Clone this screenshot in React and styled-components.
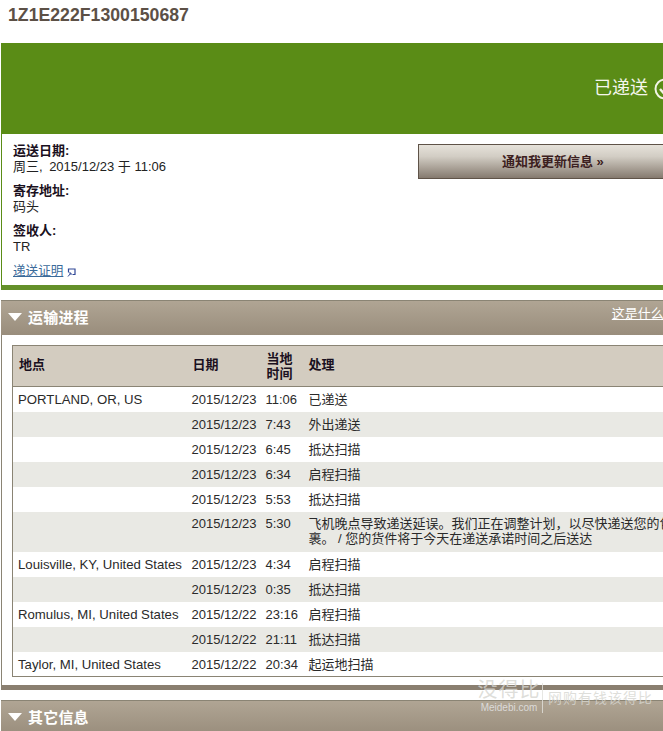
import React from 'react';
import styled, { createGlobalStyle } from 'styled-components';

const FONT = '"Liberation Sans", Arial, "Noto Sans CJK SC", sans-serif';

const GlobalStyle = createGlobalStyle`
  html, body {
    margin: 0;
    padding: 0;
    background: #fff;
    overflow: hidden;
  }
  body {
    font-family: ${FONT};
    font-size: 13px;
    color: #222;
  }
`;

const Page = styled.div`
  position: relative;
  width: 663px;
  height: 731px;
  overflow: hidden;
`;

const Sheet = styled.div`
  width: 900px;
  padding-left: 1px;
`;

const Title = styled.h1`
  margin: 0;
  padding: 5px 0 0 7px;
  height: 43px;
  box-sizing: border-box;
  font-size: 17.7px;
  line-height: 21px;
  font-weight: bold;
  color: #5c5046;
`;

const StatusCard = styled.section`
  border-left: 1px solid #5a8c16;
  border-bottom: 5px solid #64902a;
`;

const StatusBanner = styled.div`
  height: 91px;
  margin-left: -1px;
  background: #5a8c16;
  display: flex;
  align-items: center;
  padding-left: 593px;
  gap: 6px;
  color: #fff;
  font-size: 18px;
`;

const StatusLabel = styled.span`
  line-height: 22px;
  margin-top: -2px;
  color: #f4f6ec;
`;

const StatusBody = styled.div`
  display: flex;
  height: 151px;
`;

const Details = styled.div`
  width: 416px;
  padding: 9px 0 0 11px;
  box-sizing: border-box;
`;

const Detail = styled.div`
  margin-bottom: 8px;
  line-height: 16px;
`;

const DetailLabel = styled.div`
  font-weight: bold;
  color: #1a1020;
`;

const ProofLink = styled.a`
  color: #3a6a9a;
  text-decoration: underline;
  font-size: 12.6px;
  line-height: 16px;
`;

const PopupIcon = styled.svg`
  width: 9px;
  height: 9px;
  margin-left: 4px;
  vertical-align: -2px;
`;

const NotifyButton = styled.button`
  width: 300px;
  height: 35px;
  margin-top: 10px;
  padding: 0 0 3px;
  border: 1px solid #5f5348;
  background: linear-gradient(#e6e2da, #d2cdc4 35%, #857a6f);
  font-family: ${FONT};
  font-size: 13px;
  font-weight: bold;
  color: #3c2020;
  text-align: left;
  text-indent: 83px;
`;

const Section = styled.section`
  margin-top: 10px;
`;

const SectionHead = styled.header`
  height: 35px;
  box-sizing: border-box;
  border-top: 1px solid #8a8474;
  background: linear-gradient(#b0a594, #998d7c);
  display: flex;
  align-items: center;
  padding: 0 0 2px 7px;
  color: #fff;
`;

const Caret = styled.span`
  width: 0;
  height: 0;
  border-left: 7px solid transparent;
  border-right: 7px solid transparent;
  border-top: 8px solid #fff;
  margin-right: 6px;
`;

const SectionTitle = styled.h2`
  margin: 0;
  padding-bottom: 2px;
  font-size: 15px;
  letter-spacing: 0.2px;
  font-weight: bold;
  color: #fff;
`;

const HelpLink = styled.a`
  margin-left: 523px;
  margin-top: -9px;
  color: #fff;
  font-size: 13px;
  text-decoration: underline;
`;

const SectionBody = styled.div`
  border-left: 1px solid #8a8474;
  border-bottom: 5px solid #8a7f70;
  padding: 10px 0 8px 10px;
`;

const Table = styled.table`
  width: 680px;
  border-collapse: collapse;
  table-layout: fixed;
  border: 1px solid #8a8474;
  border-right: 0;
`;

const HeadCell = styled.th`
  box-sizing: border-box;
  height: 41px;
  padding: 0 0 ${p => (p.$lift ? 3 : 0)}px ${p => p.$pad || 6}px;
  background: #d3ccc0;
  border-bottom: 1px solid #8a8474;
  text-align: left;
  font-size: 13px;
  line-height: 15px;
  font-weight: bold;
  color: #1a1020;
`;

const Row = styled.tr`
  background: ${p => (p.$shaded ? '#e9e9e4' : '#fff')};
`;

const Cell = styled.td`
  box-sizing: border-box;
  height: ${p => (p.$tall ? 40 : 25)}px;
  padding: ${p => (p.$tall ? 4 : 5)}px 0 0 5px;
  vertical-align: top;
  font-size: 13px;
  line-height: 15px;
  color: #2a2a2a;
`;

const PlaceCell = styled(Cell)`
  font-size: 13.2px;
  white-space: nowrap;
`;

const Watermark = styled.div`
  position: absolute;
  left: 476px;
  top: 678px;
  display: flex;
  align-items: center;
  color: rgba(214, 214, 208, 0.8);
`;

const MarkBrand = styled.div`
  width: 66px;
  text-align: center;
`;

const MarkName = styled.div`
  font-size: 20px;
  line-height: 24px;
  letter-spacing: 1px;
`;

const MarkSite = styled.div`
  font-size: 10px;
  line-height: 12px;
  color: rgba(225, 225, 225, 0.9);
`;

const MarkSlogan = styled.div`
  border-left: 1px solid rgba(225, 225, 220, 0.8);
  height: 30px;
  line-height: 30px;
  padding-left: 5px;
  font-size: 14px;
  letter-spacing: 1px;
  white-space: nowrap;
  margin-top: 4px;
`;

const rows = [
  ['PORTLAND, OR, US', '2015/12/23', '11:06', '已递送'],
  ['', '2015/12/23', '7:43', '外出递送'],
  ['', '2015/12/23', '6:45', '抵达扫描'],
  ['', '2015/12/23', '6:34', '启程扫描'],
  ['', '2015/12/23', '5:53', '抵达扫描'],
  ['', '2015/12/23', '5:30', '飞机晚点导致递送延误。我们正在调整计划，以尽快递送您的包裹。 / 您的货件将于今天在递送承诺时间之后送达', true],
  ['Louisville, KY, United States', '2015/12/23', '4:34', '启程扫描'],
  ['', '2015/12/23', '0:35', '抵达扫描'],
  ['Romulus, MI, United States', '2015/12/22', '23:16', '启程扫描'],
  ['', '2015/12/22', '21:11', '抵达扫描'],
  ['Taylor, MI, United States', '2015/12/22', '20:34', '起运地扫描'],
];

function CheckBadge() {
  return (
    <svg width="22" height="22" viewBox="0 0 22 22">
      <circle cx="11" cy="11" r="9.5" fill="#5a8c16" stroke="#f2f5e6" strokeWidth="2" />
      <path d="M6 11 L10 15.5 L16.5 7" fill="none" stroke="#f2f5e6" strokeWidth="2.4" />
    </svg>
  );
}

export default function App() {
  return (
    <Page>
      <GlobalStyle />
      <Sheet>
        <Title>1Z1E222F1300150687</Title>
        <StatusCard>
          <StatusBanner>
            <StatusLabel>已递送</StatusLabel>
            <CheckBadge />
          </StatusBanner>
          <StatusBody>
            <Details>
              <Detail>
                <DetailLabel>运送日期:</DetailLabel>
                周三,{'\u2002'}2015/12/23 于 11:06
              </Detail>
              <Detail>
                <DetailLabel>寄存地址:</DetailLabel>
                码头
              </Detail>
              <Detail>
                <DetailLabel>签收人:</DetailLabel>
                TR
              </Detail>
              <ProofLink href="#">递送证明</ProofLink>
              <PopupIcon viewBox="0 0 9 9">
                <path d="M1.5 4.5 V1 H8 V6.5 H5.5" fill="none" stroke="#2f4796" strokeWidth="1.2" />
                <path d="M1 8.5 L3.5 5.5 M2 5 H4 V7" fill="none" stroke="#2f4796" strokeWidth="1" />
              </PopupIcon>
            </Details>
            <NotifyButton>通知我更新信息 »</NotifyButton>
          </StatusBody>
        </StatusCard>

        <Section>
          <SectionHead>
            <Caret />
            <SectionTitle>运输进程</SectionTitle>
            <HelpLink href="#">这是什么?</HelpLink>
          </SectionHead>
          <SectionBody>
            <Table>
              <colgroup>
                <col style={{ width: 174 }} />
                <col style={{ width: 74 }} />
                <col style={{ width: 43 }} />
                <col />
              </colgroup>
              <thead>
                <tr>
                  <HeadCell $lift>地点</HeadCell>
                  <HeadCell $pad={6} $lift>日期</HeadCell>
                  <HeadCell $pad={6}>当地<br />时间</HeadCell>
                  <HeadCell $pad={5} $lift>处理</HeadCell>
                </tr>
              </thead>
              <tbody>
                {rows.map((r, i) => (
                  <Row key={i} $shaded={i % 2 === 1}>
                    <PlaceCell $tall={r[4]}>{r[0]}</PlaceCell>
                    <Cell $tall={r[4]}>{r[1]}</Cell>
                    <Cell $tall={r[4]}>{r[2]}</Cell>
                    <Cell $tall={r[4]}>{r[3]}</Cell>
                  </Row>
                ))}
              </tbody>
            </Table>
          </SectionBody>
        </Section>

        <Section>
          <SectionHead>
            <Caret />
            <SectionTitle>其它信息</SectionTitle>
          </SectionHead>
        </Section>
      </Sheet>
      <Watermark>
        <MarkBrand>
          <MarkName>没得比</MarkName>
          <MarkSite>Meidebi.com</MarkSite>
        </MarkBrand>
        <MarkSlogan>网购有钱该得比</MarkSlogan>
      </Watermark>
    </Page>
  );
}
